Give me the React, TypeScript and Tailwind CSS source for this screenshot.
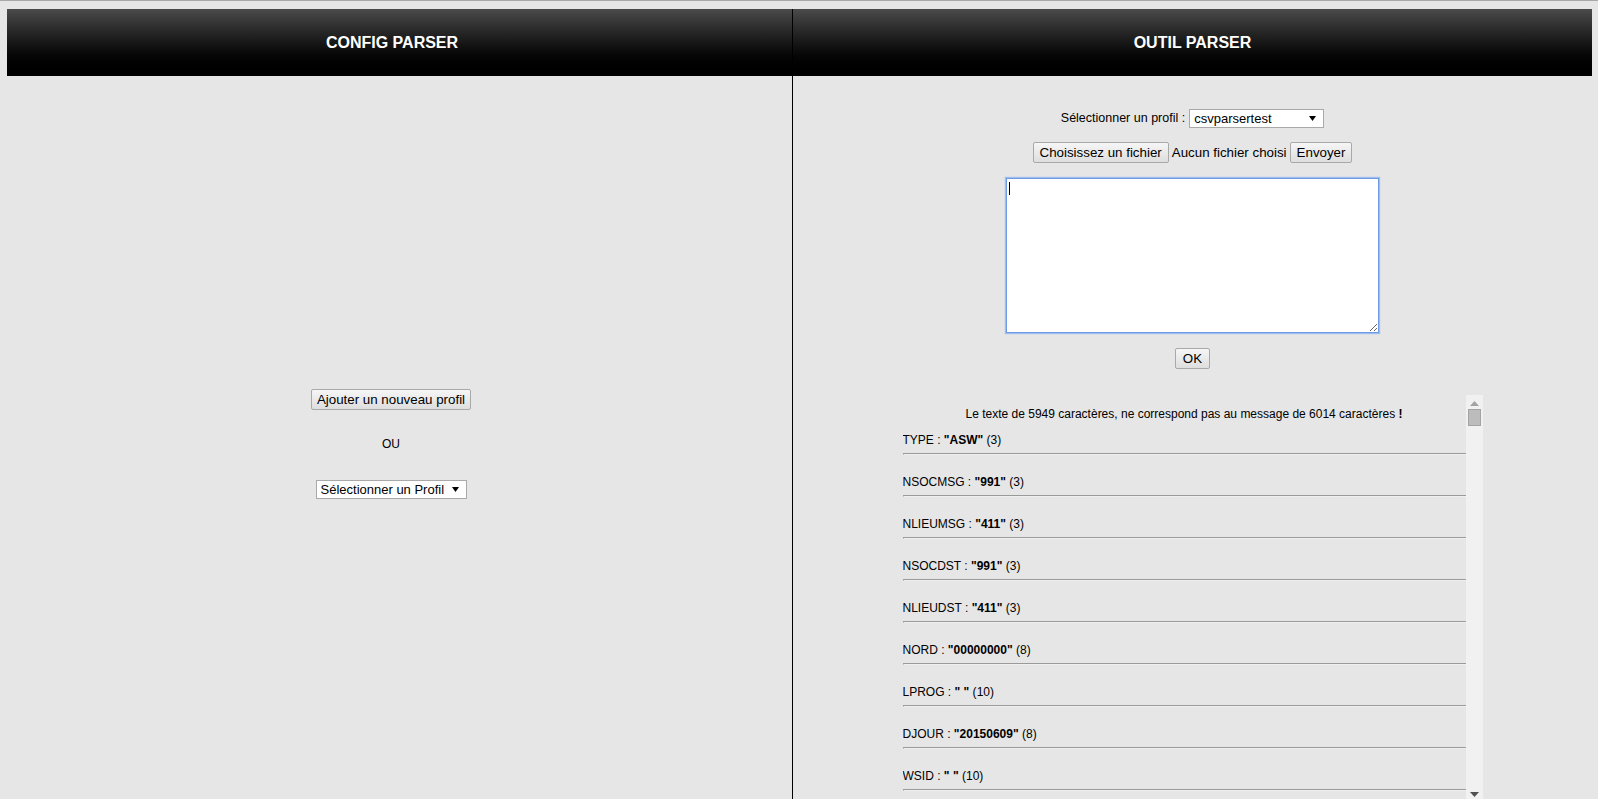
import React from 'react';

/**
 * Parser tool page: profile configuration on the left,
 * message parsing tool on the right.
 */

interface ParsedField {
  name: string;
  value: string;
  length: number;
}

const FIELDS: ParsedField[] = [
  { name: 'TYPE', value: 'ASW', length: 3 },
  { name: 'NSOCMSG', value: '991', length: 3 },
  { name: 'NLIEUMSG', value: '411', length: 3 },
  { name: 'NSOCDST', value: '991', length: 3 },
  { name: 'NLIEUDST', value: '411', length: 3 },
  { name: 'NORD', value: '00000000', length: 8 },
  { name: 'LPROG', value: ' ', length: 10 },
  { name: 'DJOUR', value: '20150609', length: 8 },
  { name: 'WSID', value: ' ', length: 10 },
];

const FONT = "font-['Liberation_Sans',Arial,sans-serif]";

function Button({ children, className = 'px-[6px]' }: { children: React.ReactNode; className?: string }) {
  return (
    <button
      type="button"
      className={`h-[21px] whitespace-nowrap text-[13.33px] leading-none text-black rounded-[2px] border border-[#a9a9a9] bg-linear-to-b from-[#f6f6f6] to-[#dedede] ${className}`}
    >
      {children}
    </button>
  );
}

function Arrow() {
  return (
    <svg width="7" height="5" viewBox="0 0 7 5" className="shrink-0">
      <polygon points="0,0 7,0 3.5,5" fill="#000" />
    </svg>
  );
}

function FakeSelect({ label, className = '' }: { label: string; className?: string }) {
  return (
    <div
      className={`inline-flex items-center justify-between h-[19px] bg-white border border-[#a9a9a9] pl-[4px] pr-[7px] text-[13px] leading-none text-black whitespace-nowrap ${className}`}
    >
      <span>{label}</span>
      <Arrow />
    </div>
  );
}

function Header({ title, className = '' }: { title: string; className?: string }) {
  return (
    <div
      className={`h-[67px] flex items-center justify-center bg-linear-to-b from-[#4b4b4b] to-black text-white font-bold text-[16px] ${className}`}
    >
      {title}
    </div>
  );
}

function FakeScrollbar() {
  return (
    <div className="w-[17px] shrink-0 bg-[#f1f1f1] flex flex-col items-center">
      <svg width="9" height="5" viewBox="0 0 9 5" className="mt-[6px]">
        <polygon points="0,5 9,5 4.5,0" fill="#a3a3a3" />
      </svg>
      <div className="mt-[3px] w-[13px] h-[17px] bg-[#bcbcbc] border border-[#a3a3a3]" />
      <div className="flex-1" />
      <svg width="9" height="5" viewBox="0 0 9 5" className="mb-[2px]">
        <polygon points="0,0 9,0 4.5,5" fill="#505050" />
      </svg>
    </div>
  );
}

function ConfigPanel() {
  return (
    <div className="w-[785px] shrink-0 flex flex-col">
      <Header title="CONFIG PARSER" className="pr-[15px]" />
      <div className="flex flex-col items-center pr-[17px] pt-[313px]">
        <Button className="px-[5px]">Ajouter un nouveau profil</Button>
        <div className="mt-[27px] text-[12px] leading-[14px]">OU</div>
        <FakeSelect label="Sélectionner un Profil" className="mt-[29px] w-[151px]" />
      </div>
    </div>
  );
}

function ToolPanel() {
  return (
    <div className="flex-1 flex flex-col border-l border-black min-h-0">
      <Header title="OUTIL PARSER" />
      <div className="flex-1 flex flex-col items-center min-h-0">
        {/* Profile selection */}
        <div className="mt-[33px] flex items-center gap-[4px] text-[12.5px]">
          <span>Sélectionner un profil :</span>
          <FakeSelect label="csvparsertest" className="w-[135px]" />
        </div>

        {/* File upload */}
        <div className="mt-[14px] flex items-center gap-[3px] text-[13.33px]">
          <Button>Choisissez un fichier</Button>
          <span>Aucun fichier choisi</span>
          <Button>Envoyer</Button>
        </div>

        {/* Raw message input */}
        <div className="relative mt-[15px]">
          <textarea
            className="block w-[373px] h-[155px] bg-white border border-[#6f9be3] shadow-[0_0_1px_1px_#9dbcf0] outline-none p-[2px] text-[13px]"
            defaultValue=""
          />
          <span className="absolute left-[3px] top-[4px] h-[13px] w-px bg-black" />
        </div>

        <Button className="mt-[15px] px-[7px]">OK</Button>

        {/* Parse result */}
        <div className="mt-[26px] w-[580px] flex-1 flex min-h-0">
          <div className="flex-1 overflow-hidden pt-[12px] text-[12px] leading-[14px] text-black">
            <p className="text-center">
              Le texte de 5949 caractères, ne correspond pas au message de 6014 caractères <b>!</b>
            </p>
            <div className="mt-[12px]">
              {FIELDS.map((field) => (
                <div key={field.name} className="mb-[20px]">
                  <div className="whitespace-pre">
                    {field.name} : <b>"{field.value}"</b> ({field.length})
                  </div>
                  <div className="mt-[6px] h-[2px] border-t border-[#9a9a9a] border-l border-l-[#9a9a9a] border-b border-b-[#f0f0f0]" />
                </div>
              ))}
            </div>
          </div>
          <FakeScrollbar />
        </div>
      </div>
    </div>
  );
}

export default function App(): React.JSX.Element {
  return (
    <div
      className={`${FONT} h-screen overflow-hidden bg-[#e6e6e6] border-t border-[#a8a8a8] pt-[8px] pl-[7px] pr-[6px] flex`}
    >
      <ConfigPanel />
      <ToolPanel />
    </div>
  );
}
